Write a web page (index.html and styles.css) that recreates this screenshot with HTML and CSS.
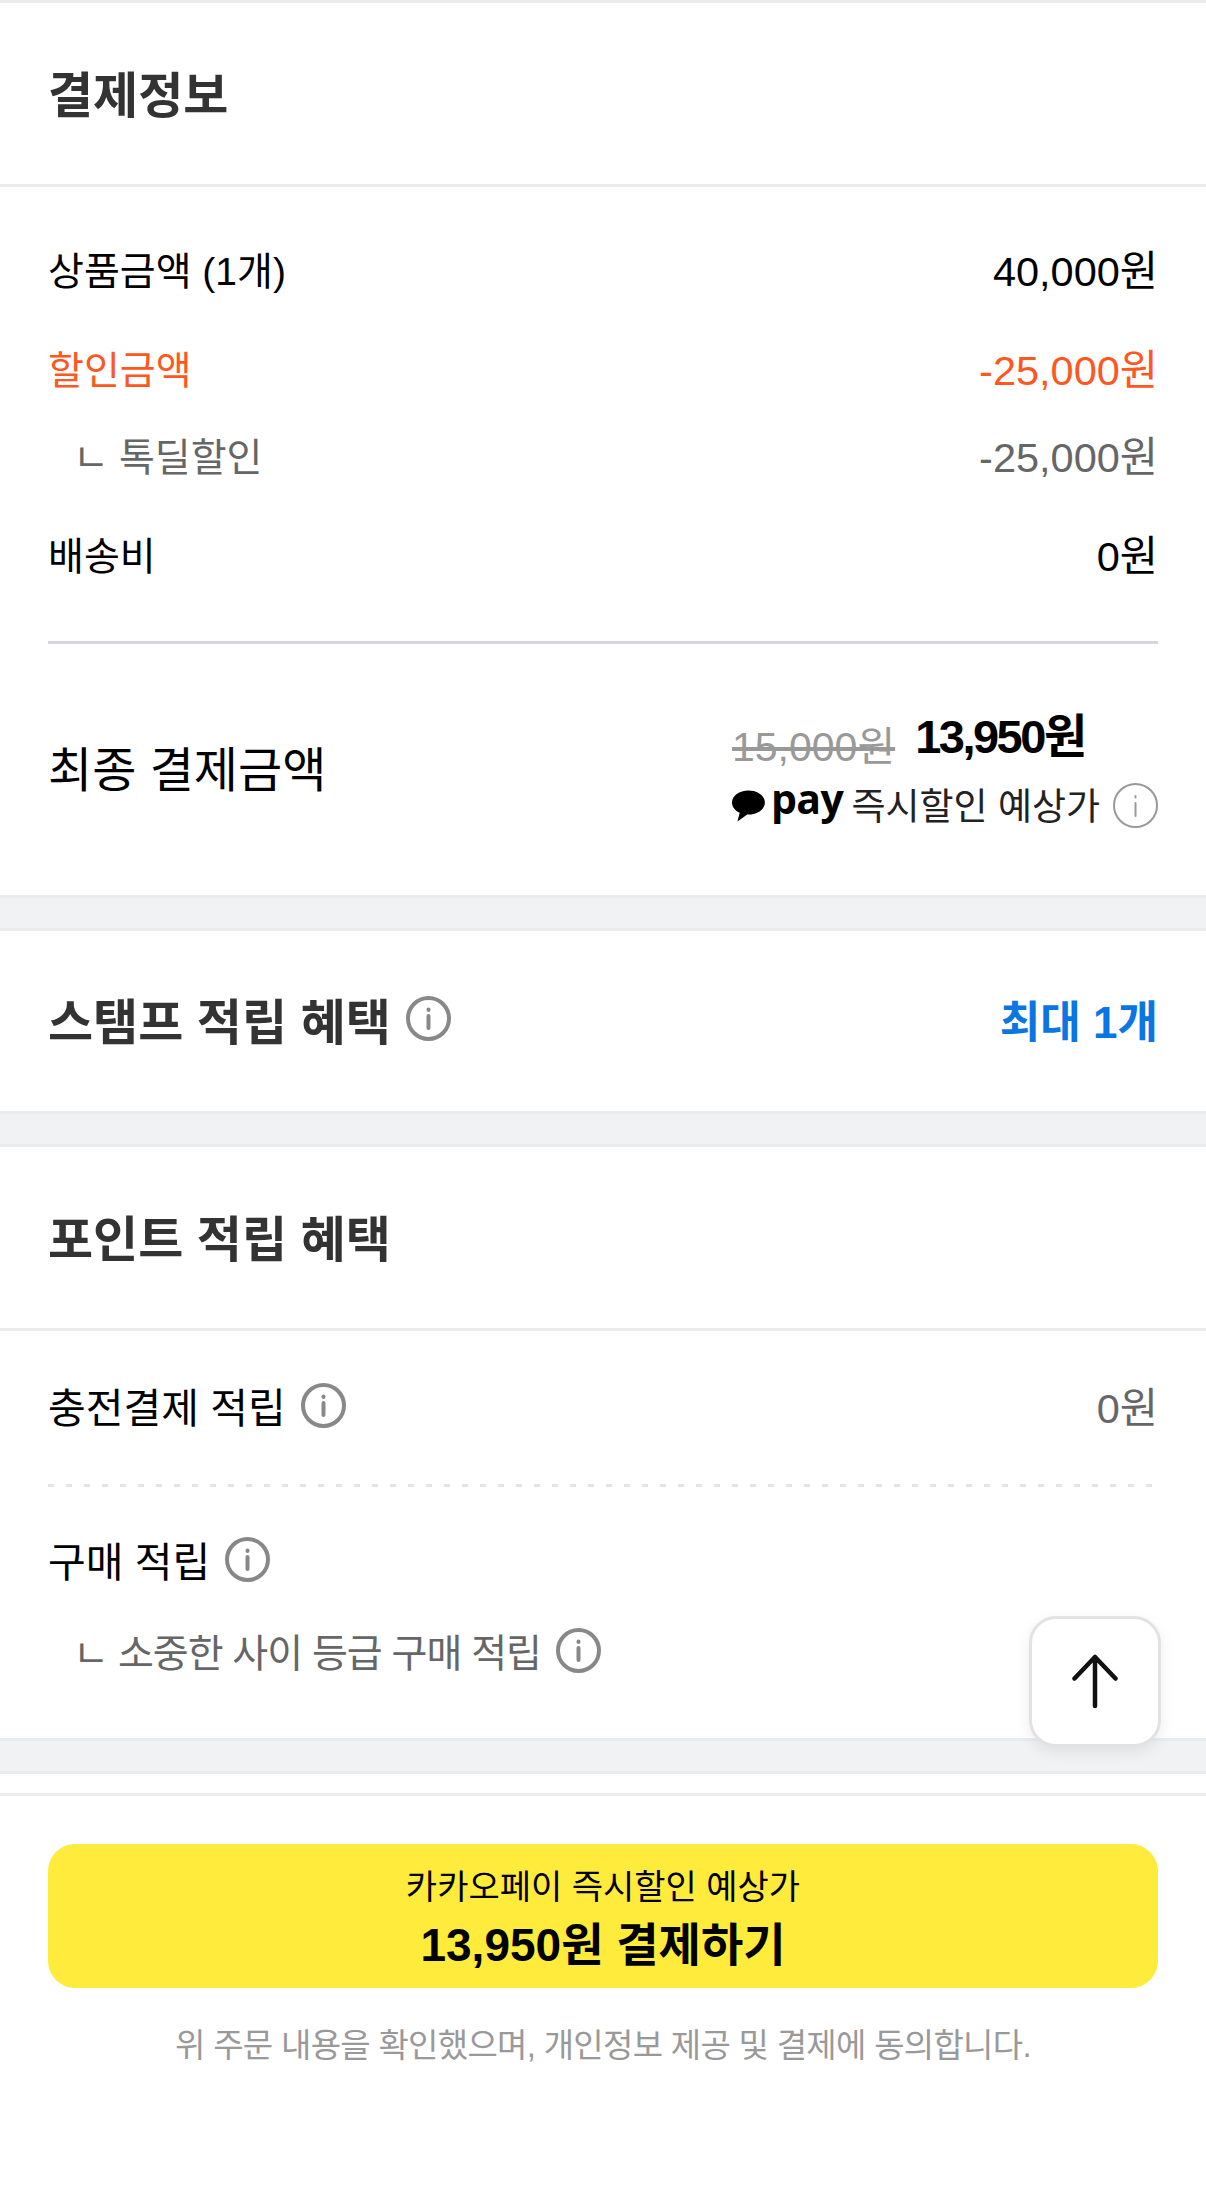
FILE: index.html
```html
<!DOCTYPE html>
<html lang="ko">
<head>
<meta charset="utf-8">
<title>결제정보</title>
<link rel="stylesheet" href="styles.css">
</head>
<body>
<main class="page">
  <section class="card">
    <div class="head"><h2 class="title">결제정보</h2></div>
    <div class="body">
      <div class="rows">
        <div class="row"><span class="label">상품금액 (1개)</span><span class="value">40,000원</span></div>
        <div class="row accent"><span class="label">할인금액</span><span class="value">-25,000원</span></div>
        <div class="row sub"><span class="label"><i class="corner">ㄴ</i>톡딜할인</span><span class="value">-25,000원</span></div>
        <div class="row"><span class="label">배송비</span><span class="value">0원</span></div>
      </div>
      <div class="total">
        <span class="total-label">최종 결제금액</span>
        <div class="total-side">
          <div class="prices"><s class="old">15,000원</s><b class="new">13,950원</b></div>
          <div class="pay">
            <svg class="bubble" viewBox="0 0 34 34"><path d="M17 1C7.600 1 0 6.500 0 13.400c0 4.600 3.200 8.500 8 10.700L5.600 33l10.200-7.200h1.200c9.400 0 17-5.500 17-12.400S26.400 1 17 1z"/></svg>
            <span class="pay-logo">pay</span>
            <span class="pay-text">즉시할인 예상가</span>
            <svg class="info thin" viewBox="0 0 45 45"><circle cx="22.500" cy="22.500" r="21.500"/><path d="M22.500 20v13M22.500 13v1.500"/></svg>
          </div>
        </div>
      </div>
    </div>
  </section>
  <div class="gap"></div>
  <section class="card">
    <div class="head head-short">
      <h2 class="title">스탬프 적립 혜택<svg class="info" viewBox="0 0 45 45"><circle cx="22.500" cy="22.500" r="20.500"/><path d="M22.500 20v12M22.500 13.500v.5"/></svg></h2>
      <span class="stamp">최대 1개</span>
    </div>
  </section>
  <div class="gap"></div>
  <section class="card">
    <div class="head"><h2 class="title">포인트 적립 혜택</h2></div>
    <div class="points">
      <div class="row point-first"><span class="label">충전결제 적립<svg class="info" viewBox="0 0 45 45"><circle cx="22.500" cy="22.500" r="20.500"/><path d="M22.500 20v12M22.500 13.500v.5"/></svg></span><span class="value muted">0원</span></div>
      <div class="dots"></div>
      <div class="row point-second"><span class="label">구매 적립<svg class="info" viewBox="0 0 45 45"><circle cx="22.500" cy="22.500" r="20.500"/><path d="M22.500 20v12M22.500 13.500v.5"/></svg></span></div>
      <div class="row sub point-third"><span class="label tight"><i class="corner">ㄴ</i>소중한 사이 등급 구매 적립<svg class="info" viewBox="0 0 45 45"><circle cx="22.500" cy="22.500" r="20.500"/><path d="M22.500 20v12M22.500 13.500v.5"/></svg></span></div>
    </div>
  </section>
  <div class="gap"></div>
  <section class="card strip"></section>
  <footer class="checkout">
    <button class="pay-button" type="button">
      <span class="btn-small">카카오페이 즉시할인 예상가</span>
      <span class="btn-big">13,950원 결제하기</span>
    </button>
    <p class="agree">위 주문 내용을 확인했으며, 개인정보 제공 및 결제에 동의합니다.</p>
  </footer>
  <button class="to-top" type="button" aria-label="맨 위로">
    <svg viewBox="0 0 48 56"><path d="M24 52V3M3.500 24.500 24 3l20.500 21.500"/></svg>
  </button>
</main>
</body>
</html>
```
FILE: styles.css
```css
* { box-sizing: border-box; }
html, body { margin: 0; padding: 0; background: #fff; }
body {
  font-family: "Liberation Sans", "Noto Sans CJK KR", sans-serif;
  color: #000;
  overflow: hidden;
}
.page { position: relative; width: 1206px; height: 2210px; overflow: hidden; }
.card { background: #fff; border-top: 3px solid #ececec; border-bottom: 3px solid #ececec; }
.gap { height: 30px; background: #f1f2f4; }
.strip { height: 25px; }
.head { height: 181px; display: flex; align-items: center; justify-content: space-between; padding: 0 48px 5px; }
.head-short { height: 180px; }
.title { margin: 0; font-size: 49px; font-weight: 700; color: #333; display: flex; align-items: center; }
.title .info { margin-left: 15px; }
.body { border-top: 3px solid #ececec; padding: 54px 48px 0; }
.row { height: 60px; padding-bottom: 6px; display: flex; align-items: center; justify-content: space-between; }
.row + .row { margin-top: 39px; }
.row.sub { margin-top: 27px; color: #666; }
.label { font-size: 39px; display: flex; align-items: center; }
.tight { letter-spacing: -1px; }
.value { font-size: 41.500px; }
.accent { color: #ff5722; }
.muted { color: #666; }
.corner { font-style: normal; font-size: 39px; margin: 0 10px 0 25px; }
.rows { padding-bottom: 55px; border-bottom: 3px solid #d6d6dc; }
.total { height: 251px; display: flex; align-items: center; justify-content: space-between; }
.total-label { font-size: 48px; margin-bottom: 8px; }
.total-side { display: flex; flex-direction: column; width: 426px; padding-top: 4px; }
.prices { display: flex; align-items: flex-end; height: 64px; white-space: nowrap; }
.old { font-size: 41px; color: #999; text-decoration: line-through; margin: 0 20px 4px 0; }
.new { font-size: 47px; letter-spacing: -2.500px; font-weight: 700; margin-bottom: 10px; }
.pay { display: flex; align-items: center; height: 50px; margin-top: 4px; white-space: nowrap; }
.bubble { width: 34px; height: 34px; fill: #000; }
.pay-logo { font-family: "Open Sans", sans-serif; font-weight: 700; font-size: 41px; line-height: 44px; margin: -16px 8px 0 6px; letter-spacing: -.5px; }
.pay-text { font-size: 37px; color: #222; margin-bottom: 4px; }
.info { width: 45px; height: 45px; fill: none; stroke: #888; stroke-width: 4; stroke-linecap: round; flex: none; margin-left: 15px; }
.info.thin { stroke: #999; stroke-width: 2; margin-left: 13px; }
.stamp { font-size: 44px; font-weight: 700; color: #0a75e3; }
.points { border-top: 3px solid #ececec; height: 410px; padding: 0 48px; }
.point-first { margin-top: 47px; }
.dots {
  height: 3px;
  margin-top: 46px;
  background: repeating-linear-gradient(90deg, #e4e4e4 0 6px, transparent 6px 18px);
}
.row.point-second { margin-top: 45px; }
.row.sub.point-third { margin-top: 31px; }
.point-first .label, .point-second .label { font-size: 41px; }
.checkout { padding: 48px 48px 0; }
.pay-button {
  display: flex; flex-direction: column; align-items: center; justify-content: center;
  width: 100%; height: 144px; border: 0; border-radius: 27px; background: #ffeb3b;
  font-family: inherit; color: #000; padding: 6px 0 0;
}
.btn-small { font-size: 34px; line-height: 46px; margin-top: 3px; }
.btn-big { font-size: 46px; font-weight: 700; line-height: 63px; padding-top: 4px; }
.agree { margin: 31px 0 0; text-align: center; font-size: 33px; letter-spacing: -.7px; color: #999; }
.to-top {
  position: absolute; left: 1029px; top: 1616px; width: 132px; height: 131px;
  background: #fff; border: 3px solid #e2e2e2; border-radius: 27px;
  box-shadow: 0 5px 15px rgba(0,0,0,.08);
  display: flex; align-items: center; justify-content: center; padding: 0;
}
.to-top svg { width: 48px; height: 56px; fill: none; stroke: #111; stroke-width: 4.500; stroke-linecap: round; stroke-linejoin: round; }
```
